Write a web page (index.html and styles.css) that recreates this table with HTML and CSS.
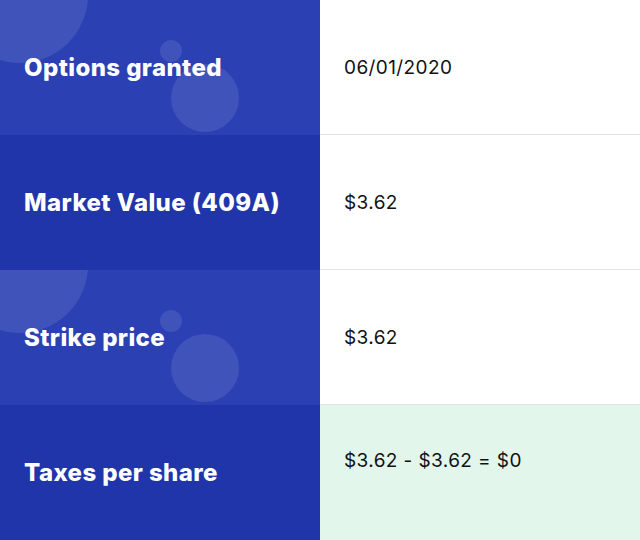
FILE: index.html
```html
<!DOCTYPE html>
<html>
<head>
<meta charset="utf-8">
<link rel="stylesheet" href="styles.css">
</head>
<body>
<div class="table">
  <div class="row">
    <div class="label light">
      <span class="bubble big"></span>
      <span class="bubble small"></span>
      <span class="bubble mid"></span>
      <span class="text">Options granted</span>
    </div>
    <div class="value">06/01/2020</div>
  </div>
  <div class="row">
    <div class="label dark"><span class="text">Market Value (409A)</span></div>
    <div class="value">$3.62</div>
  </div>
  <div class="row">
    <div class="label light">
      <span class="bubble big"></span>
      <span class="bubble small"></span>
      <span class="bubble mid"></span>
      <span class="text">Strike price</span>
    </div>
    <div class="value">$3.62</div>
  </div>
  <div class="row">
    <div class="label dark"><span class="text">Taxes per share</span></div>
    <div class="value total">$3.62 - $3.62 = $0</div>
  </div>
</div>
</body>
</html>
```
FILE: styles.css
```css
* { box-sizing: border-box; }
html, body { margin: 0; padding: 0; }
body { width: 640px; height: 540px; overflow: hidden; background: #fff; }
.table { display: flex; flex-direction: column; }
.row { display: grid; grid-template-columns: 320px 320px; height: 135px; }
.label {
  position: relative;
  overflow: hidden;
  display: flex;
  align-items: center;
  padding-left: 24px;
  color: #fff;
  font-family: "Inter", "Liberation Sans", sans-serif;
  font-weight: 800;
  font-size: 24px;
  letter-spacing: 0.4px;
}
.label.light { background: #2b40b3; }
.label.dark { background: #2035a9; }
.label .text { position: relative; }
.bubble { position: absolute; border-radius: 50%; background: rgba(255,255,255,0.1); }
.bubble.big { width: 136px; height: 136px; left: -48px; top: -73px; }
.bubble.small { width: 22px; height: 22px; left: 160px; top: 40px; }
.bubble.mid { width: 68px; height: 68px; left: 171px; top: 64px; }
.value {
  display: flex;
  align-items: center;
  padding-left: 24px;
  border-bottom: 1px solid #e4e4e4;
  font-family: "Inter", "Liberation Sans", sans-serif;
  font-size: 19px;
  letter-spacing: 0.4px;
  color: #111;
}
.value.total { background: #e3f6ec; border-bottom: none; align-items: flex-start; padding-top: 44px; }
```
